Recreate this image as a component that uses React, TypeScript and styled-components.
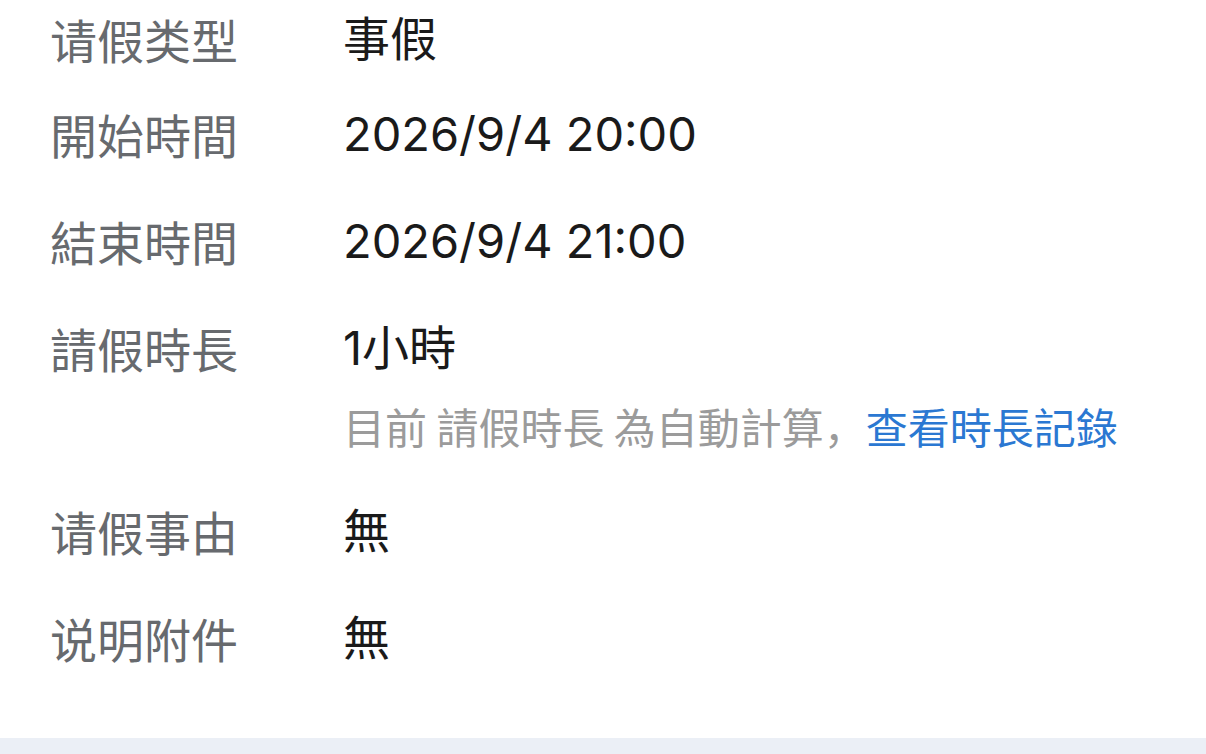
import styled, { createGlobalStyle } from "styled-components";

const GlobalStyle = createGlobalStyle`
  html, body {
    margin: 0;
    padding: 0;
    background: #ffffff;
  }
  body {
    font-family: "Noto Sans CJK SC", "Noto Sans CJK TC", "Noto Sans", sans-serif;
    -webkit-font-smoothing: antialiased;
  }
`;

const Page = styled.div`
  display: flex;
  flex-direction: column;
  width: 1206px;
  height: 754px;
  overflow: hidden;
  background: #ffffff;
`;

const List = styled.div`
  display: flex;
  flex-direction: column;
  padding: 9px 50px 0;
  flex: 1;
`;

const Row = styled.div<{ $first?: boolean }>`
  display: flex;
  align-items: flex-start;
  padding: ${({ $first }) => ($first ? "0 0 12px" : "23px 0 24px")};
`;

const Label = styled.div`
  width: 293px;
  flex-shrink: 0;
  font-size: 47px;
  line-height: 60px;
  color: #676a6e;
`;

const Value = styled.div`
  display: flex;
  flex-direction: column;
  gap: 20px;
`;

const ValueText = styled.div`
  font-family: Inter, "Noto Sans CJK SC", "Noto Sans CJK TC", sans-serif;
  font-size: 47px;
  line-height: 60px;
  color: #1a1a1a;
`;

const Hint = styled.div`
  font-size: 42px;
  line-height: 56px;
  color: #9b9b9b;
  white-space: nowrap;
`;

const HintLink = styled.a`
  color: #2b78d2;
  text-decoration: none;
`;

const BottomBar = styled.div`
  height: 16px;
  background: #ebeff6;
`;

const rows = [
  { label: "请假类型", value: "事假" },
  { label: "開始時間", value: "2026/9/4 20:00" },
  { label: "結束時間", value: "2026/9/4 21:00" },
  { label: "請假時長", value: "1小時", hint: true },
  { label: "请假事由", value: "無" },
  { label: "说明附件", value: "無" },
];

export default function App() {
  return (
    <>
      <GlobalStyle />
      <Page>
        <List>
          {rows.map((r, i) => (
            <Row key={r.label} $first={i === 0}>
              <Label>{r.label}</Label>
              <Value>
                <ValueText>{r.value}</ValueText>
                {r.hint && (
                  <Hint>
                    目前 請假時長 為自動計算，
                    <HintLink href="#">查看時長記錄</HintLink>
                  </Hint>
                )}
              </Value>
            </Row>
          ))}
        </List>
        <BottomBar />
      </Page>
    </>
  );
}
